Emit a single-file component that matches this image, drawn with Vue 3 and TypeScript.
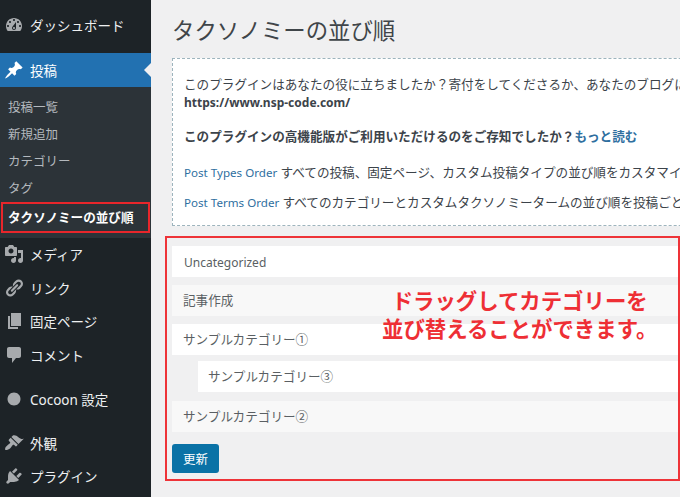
<script setup lang="ts">
interface MenuItem { label: string; icon: string; cls?: string }
const icons: Record<string, string> = {
  dash: 'M3.76 16h12.48c1.1-1.37 1.76-3.11 1.76-5 0-4.42-3.58-8-8-8s-8 3.58-8 8c0 1.89.66 3.63 1.76 5zM10 4c.55 0 1 .45 1 1s-.45 1-1 1-1-.45-1-1 .45-1 1-1zM6 6c.55 0 1 .45 1 1s-.45 1-1 1-1-.45-1-1 .45-1 1-1zm8 0c.55 0 1 .45 1 1s-.45 1-1 1-1-.45-1-1 .45-1 1-1zm-5.37 5.55L12 7v6c0 1.1-.9 2-2 2s-2-.9-2-2c0-.57.24-1.08.63-1.45zM4 10c.55 0 1 .45 1 1s-.45 1-1 1-1-.45-1-1 .45-1 1-1zm12 0c.55 0 1 .45 1 1s-.45 1-1 1-1-.45-1-1 .45-1 1-1zm-5 3c0-.55-.45-1-1-1s-1 .45-1 1 .45 1 1 1 1-.45 1-1z',
  pin: 'M10.44 3.02l1.82-1.82 6.36 6.35-1.83 1.82c-1.05-.68-2.48-.57-3.41.36l-.75.75c-.92.93-1.04 2.35-.35 3.41l-1.83 1.82-2.41-2.41-2.8 2.79c-.42.42-3.38 2.71-3.8 2.29s1.86-3.39 2.28-3.81l2.79-2.79L4.1 9.36l1.83-1.82c1.05.69 2.48.57 3.41-.36l.75-.75c.93-.92 1.04-2.35.36-3.41z',
  media: 'M13 11V4c0-.55-.45-1-1-1h-1.67L9 1H5L3.67 3H2c-.55 0-1 .45-1 1v7c0 .55.45 1 1 1h10c.55 0 1-.45 1-1zM7 4.5c1.38 0 2.5 1.12 2.5 2.5S8.38 9.5 7 9.5 4.5 8.38 4.5 7 5.62 4.5 7 4.5zM14 6h5v10.5c0 1.38-1.12 2.5-2.5 2.5S14 17.88 14 16.5s1.12-2.5 2.5-2.5c.17 0 .34.02.5.05V9h-3V6zm-4 8.05V13h2v3.5c0 1.38-1.12 2.5-2.5 2.5S7 17.88 7 16.5 8.12 14 9.5 14c.17 0 .34.02.5.05z',
  link: 'M17.74 2.76c1.68 1.69 1.68 4.41 0 6.1l-1.53 1.52c-1.12 1.12-2.7 1.47-4.14 1.09l2.62-2.61.76-.77.76-.76c.84-.84.84-2.2 0-3.04-.84-.85-2.2-.85-3.04 0l-.77.76-3.38 3.38c-.37-1.44-.02-3.02 1.1-4.14l1.52-1.53c1.69-1.68 4.42-1.68 6.1 0zM8.59 13.43l5.34-5.34c.42-.42.42-1.1 0-1.52-.44-.43-1.13-.39-1.53 0l-5.33 5.34c-.42.42-.42 1.1 0 1.52.44.43 1.13.39 1.52 0zm-.76 2.29l4.14-4.15c.38 1.44.03 3.02-1.09 4.14l-1.52 1.53c-1.69 1.68-4.41 1.68-6.1 0-1.68-1.68-1.68-4.42 0-6.1l1.53-1.52c1.12-1.12 2.7-1.47 4.14-1.1l-4.14 4.15c-.85.84-.85 2.2 0 3.05.84.84 2.2.84 3.04 0z',
  page: 'M7 2h10v13H7zM6 16h8v2H4V5h2z',
  comment: 'M5 2h10c1.1 0 2 .9 2 2v7c0 1.1-.9 2-2 2h-3l-4 5v-5H5c-1.1 0-2-.9-2-2V4c0-1.1.9-2 2-2z',
  cocoon: 'M10 3.5c3.6 0 6.5 2.9 6.5 6.5s-2.9 6.5-6.5 6.5S3.5 13.6 3.5 10 6.4 3.5 10 3.5z',
  brush: 'M14.48 11.06L7.41 3.99l1.5-1.5c.5-.56 2.3-.47 3.51.32 1.21.8 1.43 1.28 2.91 2.1 1.18.64 2.45 1.26 4.45.85zm-.71.71L6.7 4.7 4.93 6.47c-.39.39-.39 1.02 0 1.41l1.06 1.06c.39.39.39 1.03 0 1.42-.6.6-1.43 1.11-2.21 1.69-.35.26-.7.53-1.01.84C1.43 13.23.78 15.9 1.2 16.8c.56.56 3.5 0 5.04-1.54.32-.32.6-.66.85-1.02.59-.79 1.1-1.6 1.69-2.2.39-.39 1.03-.39 1.42 0l1.06 1.07c.39.39 1.02.39 1.41 0z',
  plug: 'M13.11 4.36L9.87 7.6 8 5.73l3.24-3.24c.35-.34 1.05-.2 1.56.32.52.51.66 1.21.31 1.55zm-8 1.77l.91-1.12 9.01 9.01-1.19.84c-.71.71-2.63 1.16-3.82 1.16H6.14L4.9 17.26c-.59.59-1.54.59-2.12 0-.59-.58-.59-1.53 0-2.12l1.24-1.24v-3.88c0-1.13.4-3.19 1.09-3.89zm7.26 3.97l3.24-3.24c.34-.35 1.04-.21 1.55.31.52.51.66 1.21.31 1.55l-3.24 3.25z',
}
const lower: MenuItem[] = [
  { label: 'メディア', icon: 'media' },
  { label: 'リンク', icon: 'link' },
  { label: '固定ページ', icon: 'page' },
  { label: 'コメント', icon: 'comment' },
  { label: 'Cocoon 設定', icon: 'cocoon', cls: 'sep' },
  { label: '外観', icon: 'brush', cls: 'sep' },
  { label: 'プラグイン', icon: 'plug' },
]
const subs = ['投稿一覧', '新規追加', 'カテゴリー', 'タグ']
</script>

<template>
  <div class="page">
    <aside class="side">
      <div class="row first">
        <svg class="ico" viewBox="0 0 20 20"><path :d="icons.dash" /></svg>
        <span>ダッシュボード</span>
      </div>
      <div class="row active">
        <svg class="ico" viewBox="0 0 20 20"><path :d="icons.pin" /></svg>
        <span>投稿</span>
        <i class="arrow"></i>
      </div>
      <div class="sub">
        <div v-for="s in subs" :key="s" class="subrow">{{ s }}</div>
        <div class="subrow current">タクソノミーの並び順</div>
      </div>
      <div v-for="m in lower" :key="m.label" class="row" :class="m.cls">
        <svg class="ico" viewBox="0 0 20 20"><path :d="icons[m.icon]" /></svg>
        <span>{{ m.label }}</span>
      </div>
    </aside>

    <main class="main">
      <h1 class="title">タクソノミーの並び順</h1>
      <section class="notice">
        <p class="l1">このプラグインはあなたの役に立ちましたか？寄付をしてくださるか、あなたのブログにリンクを貼ってください。</p>
        <p class="l2"><b>https://www.nsp-code.com/</b></p>
        <p class="l3"><b>このプラグインの高機能版がご利用いただけるのをご存知でしたか？</b><a class="more">もっと読む</a></p>
        <p class="l4"><a class="lat">Post Types Order</a> すべての投稿、固定ページ、カスタム投稿タイプの並び順をカスタマイズできます。</p>
        <p class="l5"><a class="lat">Post Terms Order</a> すべてのカテゴリーとカスタムタクソノミータームの並び順を投稿ごとに変更できます。</p>
      </section>
      <section class="sorter">
        <div class="item uncat">Uncategorized</div>
        <div class="item alt">記事作成</div>
        <div class="item">サンプルカテゴリー①</div>
        <div class="item child">サンプルカテゴリー③</div>
        <div class="item alt">サンプルカテゴリー②</div>
        <button class="save" type="button">更新</button>
        <div class="callout">ドラッグしてカテゴリーを<br />並び替えることができます。</div>
      </section>
    </main>
  </div>
</template>

<style scoped>
.page {
  width: 680px;
  height: 497px;
  display: flex;
  overflow: hidden;
  background: #f0f0f1;
  color: #3c434a;
  font-family: "Noto Sans", "Noto Sans CJK JP", sans-serif;
}
.side {
  width: 151px;
  flex: none;
  background: #1d2327;
  color: #eef0f1;
  font-size: 13.5px;
  padding-top: 8px;
  box-sizing: border-box;
}
.row {
  position: relative;
  height: 33.5px;
  display: flex;
  align-items: center;
  padding-left: 4px;
  gap: 6px;
  white-space: nowrap;
}
.row.first { margin-bottom: 11px; height: 34px; }
.row.sep { margin-top: 10.5px; }
.ico { width: 20px; height: 20px; flex: none; fill: #a7aaad; }
.active { background: #2271b1; color: #fff; height: 34px; }
.active .ico { fill: #fff; }
.arrow {
  position: absolute;
  right: 0;
  top: 10px;
  border: 7px solid transparent;
  border-left-width: 0;
  border-right-color: #f0f0f1;
}
.sub {
  background: #2c3338;
  padding: 7px 0 4.5px;
  color: #b4b9be;
  font-size: 12.5px;
}
.subrow {
  height: 27px;
  line-height: 27px;
  padding-left: 8px;
}
.current {
  height: 31px;
  line-height: 27px;
  margin-left: 1px;
  padding-left: 5px;
  width: 149px;
  box-sizing: border-box;
  border: 2px solid #e8262b;
  color: #fff;
  font-weight: 700;
  font-size: 12.6px;
  white-space: nowrap;
}
.main {
  flex: none;
  width: 529px;
  padding-left: 14px;
  box-sizing: border-box;
}
.title {
  margin: 0 0 0 7px;
  padding-top: 15px;
  height: 58px;
  box-sizing: border-box;
  font-size: 22.4px;
  line-height: 31px;
  font-weight: 400;
  color: #3f4549;
  white-space: nowrap;
}
.notice {
  margin-left: 7px;
  width: 600px;
  height: 168px;
  box-sizing: border-box;
  border: 1px dashed #9db4bd;
  background: #fff;
  padding-left: 11px;
  font-size: 12.6px;
  white-space: nowrap;
}
.notice p { margin: 0; line-height: 18px; }
.notice a { color: #2f6f9f; }
.lat { font-size: 11.6px; }
.l1 { padding-top: 17px; }
.l3 { padding-top: 16px; }
.l4 { padding-top: 18px; }
.l5 { padding-top: 12px; }
.l2 b { font-size: 12px; }
.more { font-weight: 700; }
.sorter {
  position: relative;
  margin-top: 10px;
  height: 245px;
  box-sizing: border-box;
  border: 2px solid #ee3338;
  padding: 8px 0 0 5px;
  display: flex;
  flex-direction: column;
  align-items: flex-start;
}
.item {
  align-self: stretch;
  height: 31px;
  flex: none;
  margin-bottom: 8px;
  padding-left: 11px;
  background: #fff;
  line-height: 31px;
  font-size: 12.6px;
  color: #5a5f63;
  white-space: nowrap;
}
.item.uncat { font-size: 12px; line-height: 33px; padding-left: 12px; }
.item.alt { background: #f8f8f8; }
.item:nth-child(3) { margin-bottom: 6px; }
.child { margin-left: 26px; padding-left: 10px; margin-bottom: 9px; line-height: 32px; }
.save {
  margin-top: 4px;
  width: 47px;
  height: 29px;
  border: 0;
  border-radius: 3px;
  padding: 0;
  background: #0a72a6;
  color: #fff;
  font: inherit;
  font-size: 12.5px;
}
.callout {
  position: absolute;
  left: 215px;
  top: 49px;
  color: #ee2f35;
  font-size: 21.4px;
  font-weight: 700;
  line-height: 28px;
  text-align: center;
  white-space: nowrap;
}
</style>

<style>
html, body { margin: 0; overflow: hidden; }
</style>
